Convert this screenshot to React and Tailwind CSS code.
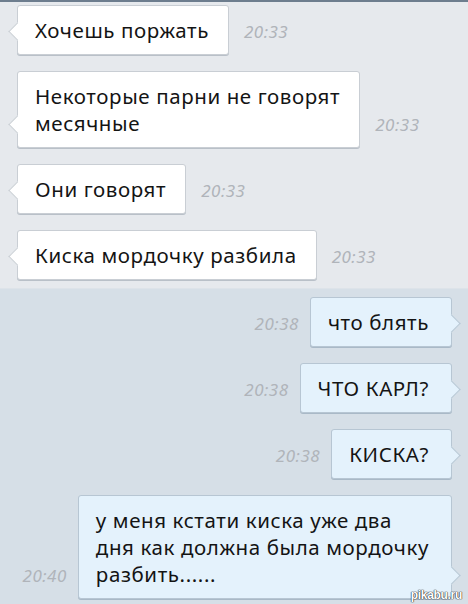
import React from "react";

const incoming = [
  { lines: ["Хочешь поржать"], time: "20:33" },
  { lines: ["Некоторые парни не говорят", "месячные"], time: "20:33" },
  { lines: ["Они говорят"], time: "20:33" },
  { lines: ["Киска мордочку разбила"], time: "20:33" },
];

const outgoing = [
  { lines: ["что блять"], time: "20:38" },
  { lines: ["ЧТО КАРЛ?"], time: "20:38" },
  { lines: ["КИСКА?"], time: "20:38" },
  { lines: ["у меня кстати киска уже два", "дня как должна была мордочку", "разбить......"], time: "20:40" },
];

function Time({ value }) {
  return (
    <span className="mb-[11px] text-[17px] italic leading-[24px] text-[#b0b4ba] tracking-[0.5px]">
      {value}
    </span>
  );
}

function InBubble({ lines, time }) {
  return (
    <div className="flex items-end gap-[15px]">
      <div className="relative rounded-[3px] border border-[#c9ced4] bg-white pl-[17px] pr-[19px] pt-[11px] pb-[10px] shadow-[0_1px_0_#b9c0c8]">
        <div className="absolute left-[-7px] bottom-[16px] h-[13px] w-[13px] rotate-45 border-b border-l border-[#c9ced4] bg-white" />
        {lines.map((l) => (
          <div key={l} className="relative leading-[27px]">{l}</div>
        ))}
      </div>
      <Time value={time} />
    </div>
  );
}

function OutBubble({ lines, time }) {
  return (
    <div className="flex items-end justify-end gap-[11px]">
      <Time value={time} />
      <div className="relative rounded-[3px] border border-[#b7c6d3] bg-[#e4f2fc] pl-[17px] pr-[22px] pt-[11px] pb-[10px] shadow-[0_1px_0_#a9b9c7]">
        <div className="absolute right-[-7px] bottom-[16px] h-[13px] w-[13px] rotate-45 border-t border-r border-[#b7c6d3] bg-[#e4f2fc]" />
        {lines.map((l) => (
          <div key={l} className="relative leading-[27px]">{l}</div>
        ))}
      </div>
    </div>
  );
}

export default function App() {
  return (
    <div className="relative h-[604px] w-[468px] overflow-hidden font-['Noto_Sans',sans-serif] text-[20.5px] tracking-[0.6px] text-[#141414]">
      <div className="h-[2px] bg-[#6d7d8e]" />
      <div className="flex flex-col gap-[16px] bg-[#e6e9ed] pl-[17px] pt-[3px] pb-[8px]">
        {incoming.map((m) => (
          <InBubble key={m.lines[0]} {...m} />
        ))}
      </div>
      <div className="flex h-full flex-col gap-[16px] border-t border-[#dde3e9] bg-[#d6dfe7] pr-[16px] pt-[8px]">
        {outgoing.map((m) => (
          <OutBubble key={m.lines[0]} {...m} />
        ))}
      </div>
      <span className="absolute bottom-[3px] right-[6px] text-[12px] font-bold leading-none tracking-[-0.3px] text-white font-['Liberation_Sans',sans-serif] [text-shadow:0_0_1px_#333,0_0_1px_#333,0_0_1px_#333]">
        pikabu.ru
      </span>
    </div>
  );
}
